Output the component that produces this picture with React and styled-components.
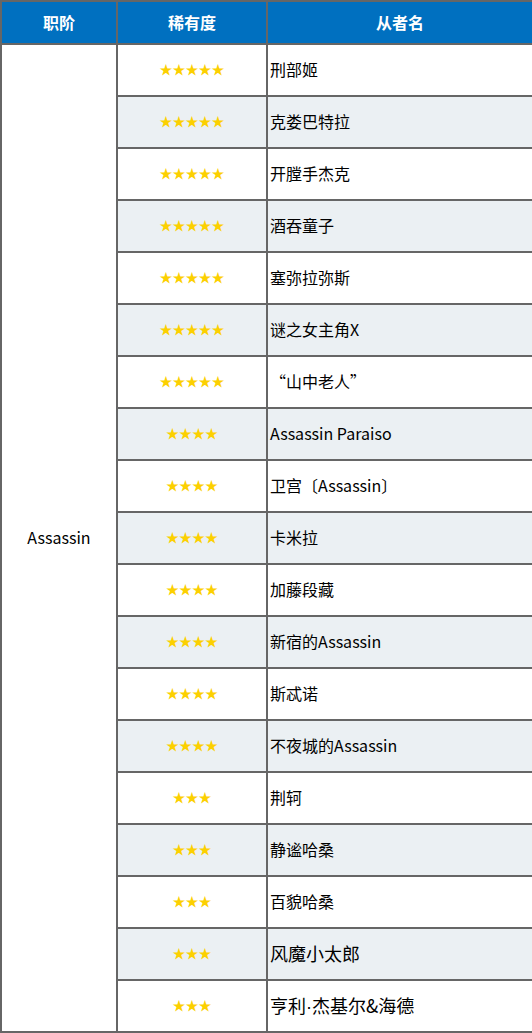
import React from 'react';
import styled, { createGlobalStyle } from 'styled-components';

const GlobalStyle = createGlobalStyle`
  html, body {
    margin: 0;
    padding: 0;
    background: #ffffff;
  }
  body {
    font-family: "Noto Sans CJK SC", "Noto Sans", sans-serif;
  }
`;

const Table = styled.table`
  width: 532px;
  border-collapse: collapse;
  table-layout: fixed;
  border: 2px solid #666666;
`;

const HeadCell = styled.th`
  height: 39px;
  padding: 0 0 2px;
  background: #0070c0;
  color: #ffffff;
  font-size: 16px;
  font-weight: bold;
  text-align: center;
  border: 2px solid #666666;
`;

const Row = styled.tr`
  height: 52px;
  background: ${(p) => (p.$shaded ? '#ebf0f3' : '#ffffff')};
`;

const ClassCell = styled.td`
  background: #ffffff;
  text-align: center;
  vertical-align: middle;
  font-size: 16px;
  color: #000000;
  border: 2px solid #666666;
  padding: 0 0 3px;
`;

const RarityCell = styled.td`
  text-align: center;
  vertical-align: middle;
  border: 2px solid #666666;
  padding: 0 0 3px;
  color: #fcd000;
  font-size: 13px;
`;

const NameCell = styled.td`
  text-align: left;
  vertical-align: middle;
  border: 2px solid #666666;
  padding: 0 0 3px 2px;
  color: #000000;
  font-size: ${(p) => (p.$large ? '18px' : '16px')};
  white-space: nowrap;
`;

const Dot = styled.span`
  font-family: "Liberation Sans", sans-serif;
`;

const servants = [
  { stars: 5, name: '刑部姬' },
  { stars: 5, name: '克娄巴特拉' },
  { stars: 5, name: '开膛手杰克' },
  { stars: 5, name: '酒吞童子' },
  { stars: 5, name: '塞弥拉弥斯' },
  { stars: 5, name: '谜之女主角X' },
  { stars: 5, name: '“山中老人”' },
  { stars: 4, name: 'Assassin Paraiso' },
  { stars: 4, name: '卫宫〔Assassin〕' },
  { stars: 4, name: '卡米拉' },
  { stars: 4, name: '加藤段藏' },
  { stars: 4, name: '新宿的Assassin' },
  { stars: 4, name: '斯忒诺' },
  { stars: 4, name: '不夜城的Assassin' },
  { stars: 3, name: '荆轲' },
  { stars: 3, name: '静谧哈桑' },
  { stars: 3, name: '百貌哈桑' },
  { stars: 3, name: '风魔小太郎', large: true },
  { stars: 3, name: '亨利·杰基尔&海德', large: true },
];

// the middle dot needs a narrow latin glyph, CJK fonts draw it full width
const renderName = (name) =>
  name.split('·').flatMap((part, i) => (i === 0 ? [part] : [<Dot key={i}>·</Dot>, part]));

export default function App() {
  return (
    <>
      <GlobalStyle />
      <Table>
        <colgroup>
          <col style={{ width: 116 }} />
          <col style={{ width: 150 }} />
          <col style={{ width: 266 }} />
        </colgroup>
        <thead>
          <tr>
            <HeadCell>职阶</HeadCell>
            <HeadCell>稀有度</HeadCell>
            <HeadCell>从者名</HeadCell>
          </tr>
        </thead>
        <tbody>
          {servants.map((s, i) => (
            <Row key={s.name} $shaded={i % 2 === 1}>
              {i === 0 && <ClassCell rowSpan={servants.length}>Assassin</ClassCell>}
              <RarityCell>{'★'.repeat(s.stars)}</RarityCell>
              <NameCell $large={s.large}>{renderName(s.name)}</NameCell>
            </Row>
          ))}
        </tbody>
      </Table>
    </>
  );
}
